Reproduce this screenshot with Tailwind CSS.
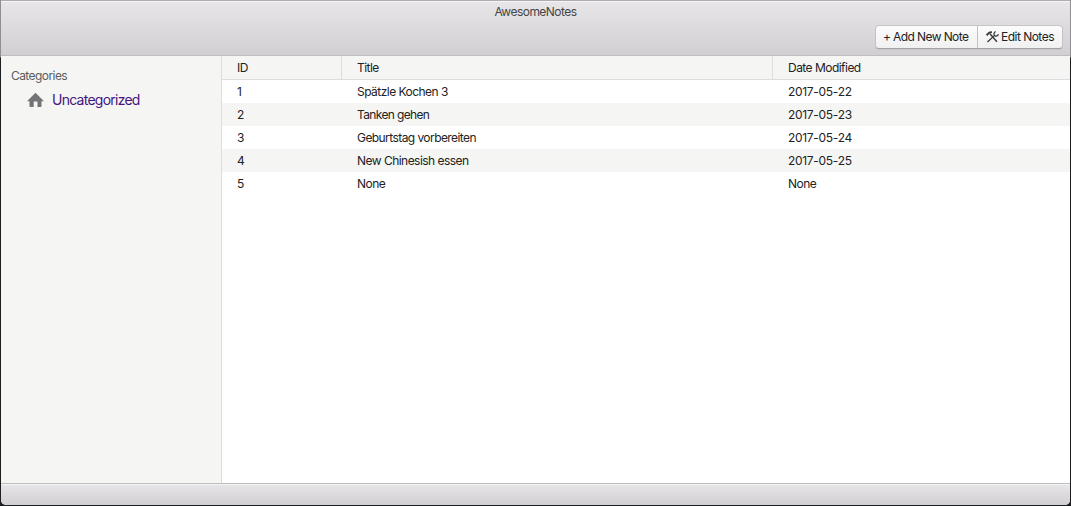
<!DOCTYPE html>
<html lang="en">
<head>
<meta charset="utf-8">
<title>AwesomeNotes</title>
<script src="https://cdn.jsdelivr.net/npm/@tailwindcss/browser@4"></script>
</head>
<body class="h-screen overflow-hidden bg-linear-to-b from-[#918e93] from-[57px] to-[#1d1e22] to-[58px] px-px pb-px font-['Inter',sans-serif] text-[12px] leading-4 tracking-[-0.53px] text-[#222222]">
<div class="flex h-[505px] flex-col overflow-hidden rounded-b-[5px] bg-white">
  <header class="flex h-14 shrink-0 flex-col border-t border-b border-t-[#b0adb1] border-b-[#bfbdc0] bg-linear-to-b from-[#e8e6e8] to-[#d1cfd1] shadow-[inset_0_1px_0_#f5f4f5]">
    <h1 class="mt-[3px] h-4 text-center text-[#454545]">AwesomeNotes</h1>
    <div class="mt-[5px] mr-[7px] flex h-6 self-end rounded border border-[#c4c2c4] border-t-[#c6c4c6] border-b-[#a3a1a3] bg-linear-to-b from-[#fcfcfc] to-[#f1f1f1] shadow-[0_1px_1px_rgba(0,0,0,0.06)]">
      <button class="flex w-[102px] items-center border-r border-[#c2c0c2] pl-[7px] tracking-[-0.6px] whitespace-pre"><span>+ Add New Note</span></button>
      <button class="flex w-[84px] items-center gap-[2px] pl-[8px] whitespace-nowrap">
        <svg class="h-3 w-[13px] shrink-0" viewBox="0 0 13 12" fill="none" stroke="#3c3c3c">
          <path d="M.6 4.300 2.600 2.200Q3.800 1.100 6 1.100" stroke-width="1.900"/>
          <path d="m3.900 2.700 7 8.100" stroke-width="1.500"/>
          <path d="M1.400 11 8 5.100" stroke-width="1.300"/>
          <path d="M9.600.5C7.700 1.500 7.300 4.500 9.200 5c1.400.4 2.800-.4 3.300-1.700" stroke-width="1.300"/>
        </svg>
        <span class="tracking-[-0.52px]">Edit Notes</span>
      </button>
    </div>
  </header>
  <div class="flex min-h-0 flex-1">
    <nav class="w-[221px] shrink-0 border-r border-[#dddddd] bg-[#f5f5f4]">
      <h2 class="mt-3 ml-[10px] h-4 tracking-[-0.57px] text-[#5c5c5c]">Categories</h2>
      <a class="mt-[6px] ml-[26px] flex h-5 items-center gap-[8px] text-[14px] leading-5 tracking-[-0.75px] text-[#45157f]">
        <svg class="h-4 w-[17px]" viewBox="0 0 17 16" fill="#737475"><path d="M8.500.7 16.500 8.700Q16.700 9.200 16 9.200H14.500V14.200Q14.500 15 13.700 15H10.500V9.600H6.700V15H3.300Q2.500 15 2.500 14.200V9.200H1Q.3 9.200.5 8.700Z"/></svg>
        <span>Uncategorized</span>
      </a>
    </nav>
    <table class="h-fit flex-1 table-fixed border-separate border-spacing-0 text-left">
      <colgroup><col class="w-[120px]"><col class="w-[431px]"><col></colgroup>
      <thead>
        <tr class="h-6 bg-[#f5f5f4] *:border-b *:border-[#dddddd] *:p-0 *:pl-[15px] *:font-normal">
          <th class="border-r">ID</th><th class="border-r">Title</th><th>Date Modified</th>
        </tr>
      </thead>
      <tbody class="[&_td]:p-0 [&_td]:pl-[15px] [&_tr]:h-[23px] [&_tr:nth-child(even)]:bg-[#f5f5f4]">
        <tr><td>1</td><td>Spätzle Kochen 3</td><td class="tracking-[-0.3px]">2017-05-22</td></tr>
        <tr><td>2</td><td class="tracking-[-0.65px]">Tanken gehen</td><td class="tracking-[-0.3px]">2017-05-23</td></tr>
        <tr><td>3</td><td class="tracking-[-0.57px]">Geburtstag vorbereiten</td><td class="tracking-[-0.3px]">2017-05-24</td></tr>
        <tr><td>4</td><td>New Chinesish essen</td><td class="tracking-[-0.3px]">2017-05-25</td></tr>
        <tr><td>5</td><td>None</td><td>None</td></tr>
      </tbody>
    </table>
  </div>
  <footer class="h-[22px] shrink-0 border-t border-[#bfbdc0] bg-linear-to-b from-[#e8e6e8] to-[#d1cfd1] shadow-[inset_0_1px_0_#f5f4f5]"></footer>
</div>
</body>
</html>
